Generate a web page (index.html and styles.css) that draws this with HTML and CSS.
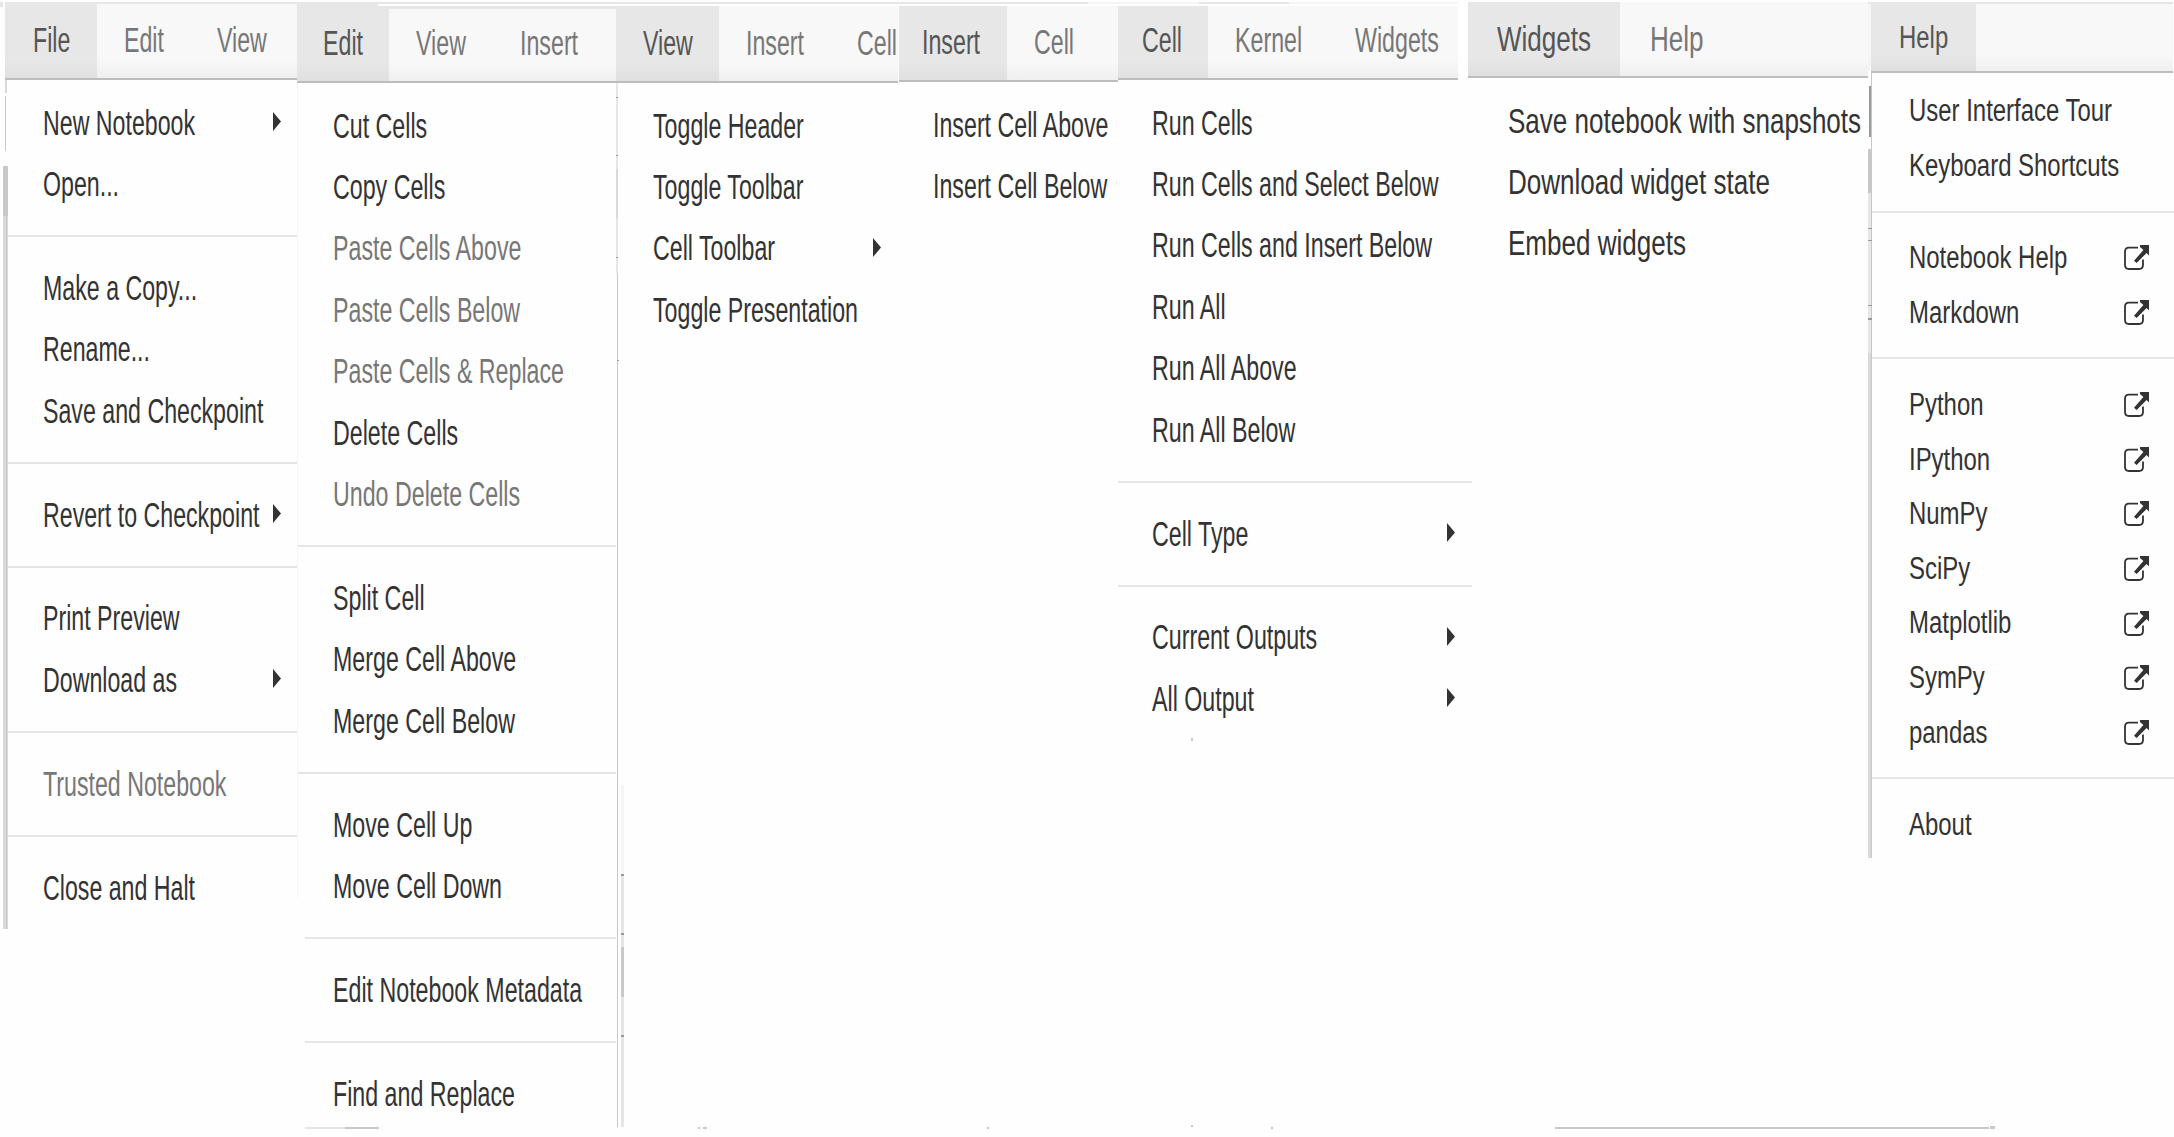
FILE: index.html
```html
<!DOCTYPE html>
<html lang="en">
<head>
<meta charset="utf-8">
<title>Notebook menus</title>
<link rel="stylesheet" href="styles.css">
</head>
<body>
<svg width="0" height="0" class="defs">
  <symbol id="caret" viewBox="0 0 8 19"><path d="M0 0L8 9.5L0 19Z"/></symbol>
  <symbol id="ext" viewBox="0 0 25 25"><path d="M14 2.6H5Q1 2.6 1 6.6V20Q1 24 5 24H15Q19 24 19 20V14.5" fill="none" stroke="#333" stroke-width="1.8"/><path d="M16 0H25V10.5L22.6 8L12.6 18L10 15.8L19.4 5L16 2Z"/></symbol>
</svg>
<main class="board">
  <section class="panel file">
    <nav><a class="on"><span>File</span></a><a><span>Edit</span></a><a><span>View</span></a></nav>
    <ul>
      <li><span>New Notebook</span><svg class="caret"><use href="#caret"/></svg></li>
      <li><span>Open...</span></li>
      <li class="sep"></li>
      <li><span>Make a Copy...</span></li>
      <li><span>Rename...</span></li>
      <li><span>Save and Checkpoint</span></li>
      <li class="sep"></li>
      <li><span>Revert to Checkpoint</span><svg class="caret"><use href="#caret"/></svg></li>
      <li class="sep"></li>
      <li><span>Print Preview</span></li>
      <li><span>Download as</span><svg class="caret"><use href="#caret"/></svg></li>
      <li class="sep"></li>
      <li class="off"><span>Trusted Notebook</span></li>
      <li class="sep"></li>
      <li><span>Close and Halt</span></li>
    </ul>
  </section>
  <section class="panel edit">
    <nav><a class="on"><span>Edit</span></a><a><span>View</span></a><a><span>Insert</span></a></nav>
    <ul>
      <li><span>Cut Cells</span></li>
      <li><span>Copy Cells</span></li>
      <li class="off"><span>Paste Cells Above</span></li>
      <li class="off"><span>Paste Cells Below</span></li>
      <li class="off"><span>Paste Cells &amp; Replace</span></li>
      <li><span>Delete Cells</span></li>
      <li class="off"><span>Undo Delete Cells</span></li>
      <li class="sep"></li>
      <li><span>Split Cell</span></li>
      <li><span>Merge Cell Above</span></li>
      <li><span>Merge Cell Below</span></li>
      <li class="sep"></li>
      <li><span>Move Cell Up</span></li>
      <li><span>Move Cell Down</span></li>
      <li class="sep short"></li>
      <li><span>Edit Notebook Metadata</span></li>
      <li class="sep short"></li>
      <li><span>Find and Replace</span></li>
    </ul>
  </section>
  <section class="panel view">
    <nav><a class="on"><span>View</span></a><a><span>Insert</span></a><a><span>Cell</span></a></nav>
    <ul>
      <li><span>Toggle Header</span></li>
      <li><span>Toggle Toolbar</span></li>
      <li><span>Cell Toolbar</span><svg class="caret"><use href="#caret"/></svg></li>
      <li><span>Toggle Presentation</span></li>
    </ul>
  </section>
  <section class="panel insert">
    <nav><a class="on"><span>Insert</span></a><a><span>Cell</span></a></nav>
    <ul>
      <li><span>Insert Cell Above</span></li>
      <li><span>Insert Cell Below</span></li>
    </ul>
  </section>
  <section class="panel cell">
    <nav><a class="on"><span>Cell</span></a><a><span>Kernel</span></a><a><span>Widgets</span></a></nav>
    <ul>
      <li><span>Run Cells</span></li>
      <li><span>Run Cells and Select Below</span></li>
      <li><span>Run Cells and Insert Below</span></li>
      <li><span>Run All</span></li>
      <li><span>Run All Above</span></li>
      <li><span>Run All Below</span></li>
      <li class="sep"></li>
      <li><span>Cell Type</span><svg class="caret"><use href="#caret"/></svg></li>
      <li class="sep"></li>
      <li><span>Current Outputs</span><svg class="caret"><use href="#caret"/></svg></li>
      <li><span>All Output</span><svg class="caret"><use href="#caret"/></svg></li>
    </ul>
  </section>
  <section class="panel widgets">
    <nav><a class="on"><span>Widgets</span></a><a><span>Help</span></a></nav>
    <ul>
      <li><span>Save notebook with snapshots</span></li>
      <li><span>Download widget state</span></li>
      <li><span>Embed widgets</span></li>
    </ul>
  </section>
  <section class="panel help">
    <nav><a class="on"><span>Help</span></a></nav>
    <ul>
      <li><span>User Interface Tour</span></li>
      <li><span>Keyboard Shortcuts</span></li>
      <li class="sep"></li>
      <li><span>Notebook Help</span><svg class="ext"><use href="#ext"/></svg></li>
      <li><span>Markdown</span><svg class="ext"><use href="#ext"/></svg></li>
      <li class="sep"></li>
      <li><span>Python</span><svg class="ext"><use href="#ext"/></svg></li>
      <li><span>IPython</span><svg class="ext"><use href="#ext"/></svg></li>
      <li><span>NumPy</span><svg class="ext"><use href="#ext"/></svg></li>
      <li><span>SciPy</span><svg class="ext"><use href="#ext"/></svg></li>
      <li><span>Matplotlib</span><svg class="ext"><use href="#ext"/></svg></li>
      <li><span>SymPy</span><svg class="ext"><use href="#ext"/></svg></li>
      <li><span>pandas</span><svg class="ext"><use href="#ext"/></svg></li>
      <li class="sep"></li>
      <li><span>About</span></li>
    </ul>
  </section>
</main>
<!-- window edges showing between the menus -->
<svg class="edges" viewBox="0 0 2174 1137" shape-rendering="crispEdges">
  <g fill="#e6e6e6">
    <path d="M0 2H3V7H0ZM5 2H1088V4H5ZM297 4H378V9H297ZM378 6H616V9H378ZM1199 2H1289V4H1199ZM1868 2H2173V4H1868Z"/>
    <path d="M616 83H618V273H616ZM621 875H624V1127H621ZM1868 193H1872V353H1868ZM305 1127H345V1129H305Z"/>
  </g>
  <path fill="#f5f5f5" d="M1088 2H1199V4H1088ZM1289 2H1458V4H1289ZM297 83H298V898H297ZM621 785H624V875H621ZM1868 4H1871V71H1868Z"/>
  <path fill="#d9d9d9" d="M3 216H8V929H3ZM1868 353H1872V858H1868ZM616 169H618V219H616ZM5 80H7V93H5Z"/>
  <path fill="#c8c8c8" d="M3 166H8V216H3ZM6 216H7V929H6ZM617 273H618V1127H617ZM621 947H624V997H621ZM1868 149H1872V193H1868ZM1871 73H1872V858H1871ZM345 1127H379V1129H345ZM1555 1127H1989V1129H1555ZM1990 1126H1995V1129H1990ZM698 1127H700V1129H698ZM703 1127H707V1129H703ZM987 1127H989V1129H987ZM1191 1125H1193V1127H1191ZM1271 1127H1273V1129H1271ZM1191 738H1193V741H1191ZM5 96H6V151H5Z"/>
  <path fill="#999" d="M616 97H618V98H616ZM616 155H618V156H616ZM616 257H618V258H616ZM617 360H619V361H617ZM621 874H624V876H621ZM621 933H624V935H621ZM621 1035H624V1037H621ZM1869 86H1871V137H1869ZM1868 228H1872V229H1868ZM1868 240H1872V241H1868ZM1868 305H1872V306H1868ZM1868 318H1872V320H1868Z"/>
</svg>
</body>
</html>
```
FILE: styles.css
```css
* { box-sizing: border-box; }
body {
  margin: 0;
  background: #fefefe;
  font-family: "Liberation Sans", Arial, sans-serif;
  font-size: 34.5px;
  color: #333;
  overflow: hidden;
}
.defs { position: absolute; }
.board {
  display: flex;
  align-items: flex-start;
  width: 2174px;
  height: 1137px;
  padding-left: 5px;
}
.panel { flex: none; --squeeze: .673; --row: 61.4px; }
.panel span {
  display: block;
  white-space: nowrap;
  transform: scaleX(var(--squeeze));
  transform-origin: 0 50%;
}
nav {
  display: flex;
  background: #f8f8f8;
  border-bottom: 2px solid #bdbdbd;
  color: #777;
  position: relative;
}
nav::after {
  content: "";
  position: absolute;
  inset: auto 0 0 0;
  height: 18px;
  background: linear-gradient(rgba(0,0,0,0), rgba(0,0,0,.035));
}
nav a { flex: none; line-height: 38px; overflow: hidden; }
nav .on { background: #e7e7e7; color: #555; }
ul { list-style: none; margin: 0; padding: 12.7px 0 0; }
li {
  display: flex;
  justify-content: space-between;
  align-items: center;
  height: var(--row);
  line-height: var(--row);
}
li span { width: 0; }
.off { color: #777; }
.sep { height: 2px; margin: 19.9px 0 20.6px; background: #e5e5e5; }
.caret { width: 8px; height: 19px; margin-top: -4px; fill: #333; }
.ext { width: 25px; height: 25px; margin-top: -1px; margin-right: 25px; fill: #333; }

.file { width: 292px; padding-top: 3px; --squeeze: .672; }
.file nav { height: 77px; }
.file nav a { padding: 18px 0 0 28px; width: 92px; }
.file nav a + a { padding-left: 27px; width: 93px; }
.file nav a + a + a { width: 105px; }
.file li:not(.sep) { padding: 0 16px 0 37.7px; }
.file .sep { margin-left: 3px; }

.edit { width: 319px; padding-top: 9px; }
.edit nav { height: 74px; }
.edit nav a { padding: 15px 0 0 26px; width: 92px; }
.edit nav a + a { padding-left: 27px; width: 102px; }
.edit nav a + a + a { padding-left: 28.5px; width: 120px; }
.edit li:not(.sep) { padding-left: 35.5px; }
.edit .short { margin-left: 8px; }

.view { width: 283px; padding-top: 6px; --squeeze: .672; }
.view nav { height: 77px; width: 282px; }
.view nav a { padding: 18px 0 0 27px; width: 103px; }
.view nav a + a { padding-left: 27px; width: 110px; }
.view nav a + a + a { padding-left: 28px; width: 69px; }
.view li { padding: 0 18px 0 37px; }

.insert { width: 219px; padding-top: 6px; }
.insert nav { height: 76px; }
.insert nav a { padding: 17px 0 0 23px; width: 108px; }
.insert nav a + a { padding-left: 27px; }
.insert li { padding-left: 34px; }

.cell { width: 350px; padding-top: 6px; }
.cell nav { height: 74px; width: 340px; }
.cell nav a { padding: 15px 0 0 23.7px; width: 90px; }
.cell nav a + a { padding-left: 27px; width: 120px; }
.cell nav a + a + a { padding-left: 27px; width: 130px; }
.cell li:not(.sep) { padding: 0 13px 0 33.8px; }
.cell .sep { width: 354px; }

.widgets { width: 403px; padding-top: 2px; --squeeze: .7545; }
.widgets nav { height: 76px; width: 400px; }
.widgets nav a { padding: 18px 0 0 28.5px; width: 152px; }
.widgets nav a + a { padding-left: 30px; }
.widgets li { padding-left: 39.5px; }

.help { width: 303px; padding-top: 4px; font-size: 31px; --squeeze: .772; --row: 54.6px; }
.help nav { height: 69px; width: 302px; }
.help nav a { padding: 15px 0 0 27.5px; width: 105px; }
.help ul { padding-top: 11.4px; }
.help li:not(.sep) { padding-left: 37.5px; }
.help .sep { margin: 17.1px 0 18.5px 1px; }

.edges { position: absolute; left: 0; top: 0; width: 2174px; height: 1137px; pointer-events: none; }
```
